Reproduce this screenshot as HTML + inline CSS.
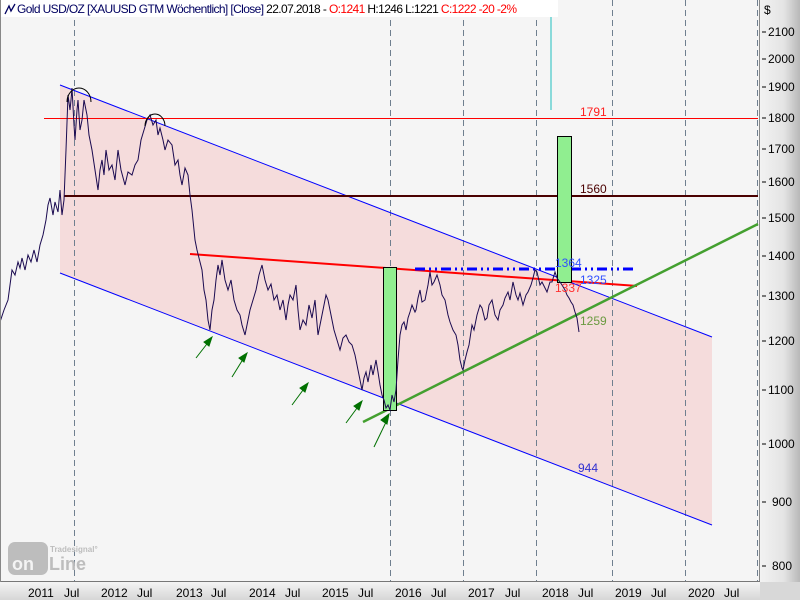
<!DOCTYPE html>
<html><head><meta charset="utf-8"><style>
body{margin:0;width:800px;height:600px;overflow:hidden;background:#f4f4f4;font-family:"Liberation Sans",sans-serif}
svg{display:block}
</style></head><body>
<svg width="800" height="600" viewBox="0 0 800 600" font-family="Liberation Sans, sans-serif">
<defs>
<linearGradient id="ra" x1="0" x2="1"><stop offset="0" stop-color="#f2f2f2"/><stop offset="0.6" stop-color="#e4e4e4"/><stop offset="1" stop-color="#b8b8b8"/></linearGradient>
<linearGradient id="ba" x1="0" y1="0" x2="0" y2="1"><stop offset="0" stop-color="#f4f4f4"/><stop offset="1" stop-color="#d6d6d6"/></linearGradient>
</defs>
<rect width="800" height="600" fill="#f5f5f5"/>
<polygon points="60,85 712,337 712,525 60,273" fill="#f5dcdc"/>
<g stroke="#6f7f8f" stroke-dasharray="6,4" stroke-width="1">
<line x1="74.5" y1="0" x2="74.5" y2="581"/><line x1="390.5" y1="0" x2="390.5" y2="581"/>
<line x1="463.5" y1="0" x2="463.5" y2="581"/><line x1="536.5" y1="0" x2="536.5" y2="581"/>
<line x1="612.5" y1="0" x2="612.5" y2="581"/><line x1="685.5" y1="0" x2="685.5" y2="581"/>
<line x1="757.5" y1="0" x2="757.5" y2="581"/>
</g>
<line x1="60" y1="85" x2="712" y2="337" stroke="#0000ff" stroke-width="1"/>
<line x1="60" y1="273" x2="712" y2="525" stroke="#0000ff" stroke-width="1"/>
<line x1="44" y1="118.5" x2="758" y2="118.5" stroke="#ff0000" stroke-width="1"/>
<line x1="64" y1="196" x2="758" y2="196" stroke="#4a0000" stroke-width="2"/>
<line x1="190" y1="254" x2="637" y2="286" stroke="#ff0000" stroke-width="2"/>
<line x1="363" y1="422" x2="758" y2="224" stroke="#44a030" stroke-width="2.5"/>
<line x1="415" y1="269" x2="633" y2="269" stroke="#0000ff" stroke-width="3" stroke-dasharray="10,4,2,4,2,4"/>
<line x1="551" y1="0" x2="551" y2="110" stroke="#20c0c0" stroke-width="1"/>
<rect x="383.5" y="267.5" width="13" height="143" fill="#90ee90" stroke="#000" stroke-width="1"/>
<rect x="557.5" y="136.5" width="14" height="146" fill="#90ee90" stroke="#000" stroke-width="1"/>
<polyline fill="none" stroke="#1a0a50" stroke-width="1" points="0,322 4,310 8,300 10,285 12,270 15,275 18,262 20,268 22,258 25,270 28,255 31,262 34,250 37,262 40,245 43,235 46,220 48,205 50,198 53,215 55,202 58,212 60,190 62,215 64,200 66,150 68,95 70,110 71,100 72,88 74,125 75,140 77,110 78,100 80,130 82,120 84,100 87,115 89,135 92,150 95,170 98,190 100,170 102,160 104,175 106,150 109,170 112,165 115,180 118,150 121,170 125,185 128,172 132,175 135,165 138,160 141,140 144,130 147,120 150,115 153,125 156,120 158,135 160,128 163,140 165,150 168,140 172,145 175,165 178,160 180,175 182,185 185,168 188,175 190,195 192,210 195,240 197,250 200,262 202,270 204,290 206,300 208,320 210,330 212,310 214,300 216,280 218,265 220,275 222,260 225,280 228,290 231,280 234,300 237,310 240,315 242,325 245,335 248,320 250,310 253,300 256,290 259,275 262,265 265,280 268,290 271,284 274,300 277,295 280,310 283,300 286,320 288,305 290,295 293,300 296,285 298,310 300,330 303,320 306,325 309,305 312,318 315,300 318,335 321,320 323,310 326,295 328,300 331,315 334,330 337,340 340,350 343,338 346,335 349,342 352,345 355,355 358,370 360,380 362,390 364,378 366,372 368,382 371,365 373,375 376,360 378,372 380,385 382,395 384,400 386,408 388,405 390,410 392,395 394,402 396,390 398,360 400,335 402,325 404,322 406,330 408,318 410,312 412,305 415,312 416,310 418,298 420,290 422,302 425,300 428,285 430,272 432,285 434,282 437,275 440,285 442,295 445,300 448,315 450,322 453,330 456,335 458,345 460,360 462,368 463,370 465,360 467,352 469,345 472,325 474,330 477,315 480,305 482,308 485,320 487,318 489,305 492,300 495,315 498,320 500,310 503,305 505,298 508,292 510,300 513,282 516,295 518,300 520,293 523,305 526,295 528,292 531,285 533,278 535,270 537,272 540,285 542,282 545,288 547,292 550,282 552,282 555,272 557,278 560,282 562,285 565,290 567,295 569,298 571,302 573,305 575,312 577,318 579,332"/>
<path d="M67,102 A12,14 0 0 1 91,102" fill="none" stroke="#000"/>
<path d="M145,126 A10,12 0 0 1 165,126" fill="none" stroke="#000"/>
<g stroke="#007000" fill="#007000" stroke-width="1">
<line x1="196" y1="358" x2="210" y2="340"/><polygon points="212,337 204,342 209,346"/>
<line x1="232" y1="377" x2="245" y2="356"/><polygon points="247,353 239,358 244,362"/>
<line x1="292" y1="405" x2="306" y2="386"/><polygon points="308,383 300,388 305,392"/>
<line x1="346" y1="423" x2="360" y2="404"/><polygon points="362,401 354,406 359,410"/>
<line x1="374" y1="447" x2="388" y2="418"/><polygon points="389,414 381,420 387,424"/>
</g>
<g font-size="12">
<text x="580" y="116" fill="#ff2020">1791</text>
<text x="580" y="193" fill="#4a0000">1560</text>
<text x="555" y="267" fill="#3050ff">1364</text>
<text x="580" y="284" fill="#3050ff">1325</text>
<text x="555" y="292" fill="#ff3030">1337</text>
<text x="580" y="325" fill="#6a9a40">1259</text>
<text x="578" y="472" fill="#3030d0">944</text>
</g>
<rect x="0" y="0" width="558" height="17" fill="#fff"/>
<path d="M5,14 L9,6 L11,11 L15,4" fill="none" stroke="#000060" stroke-width="1.3"/>
<text x="17" y="13" font-size="12" fill="#000060" textLength="500" lengthAdjust="spacing">Gold USD/OZ [XAUUSD GTM  Wöchentlich] [Close] <tspan fill="#000">22.07.2018 - </tspan><tspan fill="#ff0000">O:1241</tspan><tspan fill="#000"> H:1246 L:1221 </tspan><tspan fill="#ff0000">C:1222 -20 -2%</tspan></text>
<rect x="760" y="0" width="40" height="582" fill="url(#ra)"/>
<line x1="759.5" y1="0" x2="759.5" y2="582" stroke="#888"/>
<g font-size="12" fill="#000">
<text x="764" y="14">$</text>
<text x="768" y="36">2100</text><text x="768" y="63">2000</text><text x="768" y="91">1900</text>
<text x="768" y="122">1800</text><text x="768" y="153">1700</text><text x="768" y="186">1600</text>
<text x="768" y="222">1500</text><text x="768" y="260">1400</text><text x="768" y="300">1300</text>
<text x="768" y="345">1200</text><text x="768" y="394">1100</text><text x="768" y="448">1000</text>
<text x="772" y="506">900</text><text x="772" y="570">800</text>
</g>
<g stroke="#000">
<line x1="762" y1="32" x2="766" y2="32"/><line x1="762" y1="59" x2="766" y2="59"/><line x1="762" y1="87" x2="766" y2="87"/>
<line x1="762" y1="118" x2="766" y2="118"/><line x1="762" y1="149" x2="766" y2="149"/><line x1="762" y1="182" x2="766" y2="182"/>
<line x1="762" y1="218" x2="766" y2="218"/><line x1="762" y1="256" x2="766" y2="256"/><line x1="762" y1="296" x2="766" y2="296"/>
<line x1="762" y1="341" x2="766" y2="341"/><line x1="762" y1="390" x2="766" y2="390"/><line x1="762" y1="444" x2="766" y2="444"/>
<line x1="762" y1="502" x2="766" y2="502"/><line x1="762" y1="566" x2="766" y2="566"/>
</g>
<rect x="0" y="582" width="760" height="18" fill="url(#ba)"/>
<rect x="760" y="582" width="40" height="18" fill="#d8d8d8"/>
<line x1="0" y1="581.5" x2="760" y2="581.5" stroke="#777"/>
<line x1="0.5" y1="0" x2="0.5" y2="582" stroke="#888"/>
<g font-size="12" fill="#000">
<text x="28" y="597">2011</text><text x="64" y="597">Jul</text>
<text x="101" y="597">2012</text><text x="137" y="597">Jul</text>
<text x="176" y="597">2013</text><text x="211" y="597">Jul</text>
<text x="249" y="597">2014</text><text x="285" y="597">Jul</text>
<text x="322" y="597">2015</text><text x="358" y="597">Jul</text>
<text x="395" y="597">2016</text><text x="431" y="597">Jul</text>
<text x="468" y="597">2017</text><text x="505" y="597">Jul</text>
<text x="542" y="597">2018</text><text x="578" y="597">Jul</text>
<text x="615" y="597">2019</text><text x="651" y="597">Jul</text>
<text x="688" y="597">2020</text><text x="724" y="597">Jul</text>
</g>
<rect x="8" y="542" width="40" height="33" rx="7" fill="#bdbdbd"/>
<text x="12" y="570" font-size="18" font-weight="bold" fill="#f4f4f4">on</text>
<text x="49" y="570" font-size="18" font-weight="bold" fill="#bdbdbd">Line</text>
<text x="50" y="552" font-size="8" font-weight="bold" fill="#bdbdbd">Tradesignal°</text>
</svg>
</body></html>
